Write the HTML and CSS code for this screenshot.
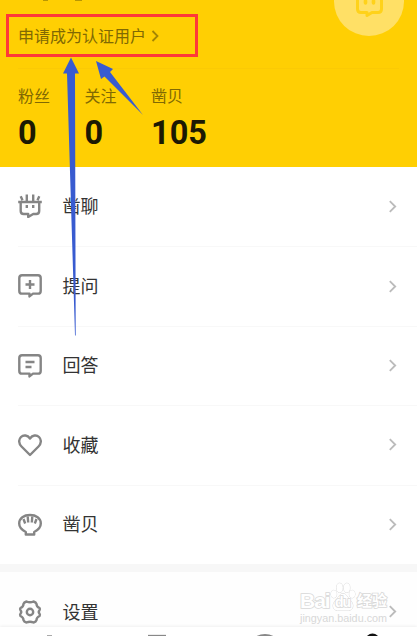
FILE: index.html
```html
<!DOCTYPE html>
<html lang="zh-CN">
<head>
    <meta charset="UTF-8">
    <meta name="viewport" content="width=device-width, initial-scale=1.0">
    <title>我的</title>
    <link rel="stylesheet" href="styles.css">
</head>
<body>
    <header class="profile">
        <svg class="signature" width="90" height="2" viewBox="0 0 90 2"><path d="M43 0h5M75 0h7" stroke="#a38505" stroke-width="1.5"/></svg>
        <div class="avatar">
            <svg width="30" height="30" viewBox="0 0 30 30" fill="none" stroke="#ffd21a" stroke-width="3" stroke-linejoin="round">
                <path d="M3.5 5v13q0 3.500 3.500 3.500h6v3l5-3h6q3.500 0 3.500-3.500V5"/>
                <path d="M11.500 10v2M19.500 10v2" stroke-width="3.6" stroke-linecap="round"/>
            </svg>
        </div>
        <a class="verify">
            <span>申请成为认证用户</span>
            <svg width="8" height="12" viewBox="0 0 8 12"><path d="M1.5 1l5 5-5 5" fill="none" stroke="#a38505" stroke-width="1.8"/></svg>
        </a>
        <div class="stats">
            <div class="stat"><span>粉丝</span><b>0</b></div>
            <div class="stat"><span>关注</span><b>0</b></div>
            <div class="stat"><span>凿贝</span><b>105</b></div>
        </div>
    </header>

    <main class="menu">
        <a class="item">
            <svg class="icon" viewBox="0 0 24 24">
                <path d="M.2 8h23.600M2.700 8v9q0 3 3 3h4.500v3l5-3h3q3 0 3-3V8M8.800 .5V8M15.200 .5V8M2.700 2.200l1.800 4M21.300 2.200l-1.800 4"/>
                <path d="M8.800 11v3M15.200 11v3"/>
            </svg>
            <span class="label">凿聊</span>
            <svg class="arrow" viewBox="0 0 8 12"><path d="M1.5 1l5 5-5 5"/></svg>
        </a>
        <a class="item">
            <svg class="icon" viewBox="0 0 24 24">
                <path d="M4 1.200h16q2.700 0 2.700 2.700v13q0 2.700-2.700 2.700h-5l-3.500 2.800v-2.800H4q-2.700 0-2.700-2.700v-13Q1.300 1.200 4 1.200z"/>
                <path d="M12 6v9M7.500 10.500h9"/>
            </svg>
            <span class="label">提问</span>
            <svg class="arrow" viewBox="0 0 8 12"><path d="M1.5 1l5 5-5 5"/></svg>
        </a>
        <a class="item">
            <svg class="icon" viewBox="0 0 24 24">
                <path d="M4 1.200h16q2.700 0 2.700 2.700v13q0 2.700-2.700 2.700h-5l-3.500 2.800v-2.800H4q-2.700 0-2.700-2.700v-13Q1.300 1.200 4 1.200z"/>
                <path d="M7.500 8h9M7.500 13h6"/>
            </svg>
            <span class="label">回答</span>
            <svg class="arrow" viewBox="0 0 8 12"><path d="M1.5 1l5 5-5 5"/></svg>
        </a>
        <a class="item">
            <svg class="icon" viewBox="0 0 24 24">
                <path d="M12 22L3.500 13.500C.5 10.500.5 6.500 3 4s6.500-2 9 1.500C14.500 2 18.500 1.500 21 4s2.500 6.500-.5 9.500z"/>
            </svg>
            <span class="label">收藏</span>
            <svg class="arrow" viewBox="0 0 8 12"><path d="M1.5 1l5 5-5 5"/></svg>
        </a>
        <a class="item">
            <svg class="icon" viewBox="0 0 24 24">
                <path d="M7.800 21.500v-2.500C4 17 1.200 14.500 1.200 10.500 1.200 5 6 2 12 2s10.800 3 10.800 8.500c0 4-2.800 6.500-6.600 8.500v2.500z"/>
                <path d="M5.500 6l1.700 4.500M9.700 3.500l.5 6M14.300 3.500l-.5 6M18.500 6l-1.700 4.500"/>
            </svg>
            <span class="label">凿贝</span>
            <svg class="arrow" viewBox="0 0 8 12"><path d="M1.5 1l5 5-5 5"/></svg>
        </a>
    </main>

    <section class="settings">
        <a class="item">
            <svg class="icon" viewBox="0 0 24 24">
                <path d="M8.500 1.500q3.500 1.600 7 0 2.500.8 3 2.400 0 2.600 3 4.100.8 1.200 0 2.400-1.600 1.600 0 3.200.8 1.200 0 2.400-3 1.500-3 4.100-.5 1.600-3 2.400-3.500-1.600-7 0-2.500-.8-3-2.400 0-2.600-3-4.100-.8-1.200 0-2.400 1.600-1.600 0-3.200-.8-1.200 0-2.400 3-1.500 3-4.100.5-1.600 3-2.400z"/>
                <circle cx="12" cy="12" r="3.200"/>
            </svg>
            <span class="label">设置</span>
            <svg class="arrow" viewBox="0 0 8 12"><path d="M1.5 1l5 5-5 5"/></svg>
        </a>
        <div class="watermark">
            <div class="brand">
                <span class="bai">Bai</span>
                <span class="paw">
                    <svg width="26" height="30" viewBox="0 0 27 30" fill="#fff" stroke="#d8d8d8">
                        <ellipse cx="4" cy="12" rx="3" ry="4"/>
                        <ellipse cx="10" cy="5.500" rx="3.200" ry="4.800"/>
                        <ellipse cx="17.500" cy="5.500" rx="3.200" ry="4.800"/>
                        <ellipse cx="23" cy="12" rx="3" ry="4"/>
                        <path d="M13.500 11.500c-4 0-5 5-8 7.500-4 4-2.500 10 2.500 10h11c5 0 6.500-6 2.500-10-3-2.500-4-7.500-8-7.500z"/>
                    </svg>
                    <em>du</em>
                </span>
                <span class="cn">经验</span>
            </div>
            <div class="url">jingyan.baidu.com</div>
        </div>
    </section>

    <nav class="tabbar">
        <svg width="417" height="9" viewBox="0 0 417 9">
            <path d="M47 8.500h5" stroke="#aaa" stroke-width="1"/>
            <path d="M148 8.500h18" stroke="#888" stroke-width="1.300"/>
            <ellipse cx="265" cy="13" rx="11" ry="6" fill="#888"/>
            <circle cx="372.500" cy="13.500" r="7" fill="#111"/>
        </svg>
    </nav>

    <div class="highlight"></div>
    <svg class="pointers" width="417" height="340" viewBox="0 0 417 340" fill="#385bd0">
        <path d="M71 57.500l8 16h-4l.7 262h-.7L67 73.500h-4z"/>
        <path d="M96 61l17 8-3 3L143 115l-38.500-38.500-3.500 2.500z"/>
    </svg>
</body>
</html>
```
FILE: styles.css
```css
body {
    margin: 0;
    position: relative;
    height: 636px;
    display: flex;
    flex-direction: column;
    overflow: hidden;
    background: #fff;
    font-family: Roboto, "Noto Sans CJK SC", sans-serif;
    color: #333;
}
svg {
    display: block;
    flex: none;
}
.profile {
    position: relative;
    flex: none;
    box-sizing: border-box;
    height: 167px;
    padding: 25px 18px 0;
    background: #ffcf03;
}
.signature {
    position: absolute;
    top: 0;
    left: 0;
}
.avatar {
    position: absolute;
    top: -33px;
    left: 334px;
    width: 70px;
    height: 69px;
    border-radius: 50%;
    background: #ffe066;
    overflow: hidden;
}
.avatar svg {
    margin: 24px 0 0 20px;
}
.verify {
    display: flex;
    align-items: center;
    gap: 5px;
    height: 23px;
    padding-bottom: 20px;
    border-bottom: 1px solid #fbca05;
    font-size: 16px;
    line-height: 23px;
    color: #806903;
}
.verify svg {
    margin-top: -1px;
}
.stats {
    display: flex;
    margin-top: 17px;
}
.stat {
    width: 66.5px;
}
.stat span {
    display: block;
    font-size: 16px;
    line-height: 22px;
    color: #806903;
}
.stat b {
    display: block;
    margin-top: 8px;
    font-size: 32.5px;
    line-height: 34px;
    color: #1c1903;
}
.menu {
    flex: none;
    border-bottom: 8px solid #f7f7f7;
}
.item {
    display: flex;
    align-items: center;
    box-sizing: border-box;
    height: 79.4px;
    margin-left: 18px;
    padding-right: 20.5px;
}
.item + .item {
    border-top: 1px solid #f8f8f8;
}
.icon {
    width: 24px;
    height: 24px;
    margin-top: -0.5px;
    fill: none;
    stroke: #858585;
    stroke-width: 2.4;
    stroke-linejoin: round;
}
.label {
    margin-top: 1px;
    margin-left: 20.5px;
    font-size: 18px;
    line-height: 26px;
}
.arrow {
    width: 9px;
    height: 13px;
    margin-top: -1px;
    margin-left: auto;
    fill: none;
    stroke: #bbb;
    stroke-width: 1.7;
}
.settings {
    position: relative;
    flex: none;
    height: 55px;
    background: #fefefe;
}
.settings .item {
    height: 80.4px;
}
.watermark {
    position: absolute;
    top: 9px;
    left: 300px;
    color: #fff;
    -webkit-text-stroke: 1.6px #d8d8d8;
    paint-order: stroke fill;
    font-family: "Liberation Sans", "Noto Sans CJK SC", sans-serif;
}
.brand {
    display: flex;
    align-items: flex-end;
    height: 31px;
    font-size: 21px;
    line-height: 22px;
}
.bai {
    width: 30px;
    font-weight: bold;
    letter-spacing: -1px;
}
.paw {
    position: relative;
}
.paw em {
    position: absolute;
    top: 12px;
    left: 5px;
    font-size: 14px;
    font-style: normal;
    font-weight: bold;
    letter-spacing: -1px;
    line-height: 16px;
}
.cn {
    margin-left: 1px;
    font-size: 15px;
    font-weight: bold;
}
.url {
    font-size: 10.8px;
    line-height: 12px;
    color: #d8d8d8;
    -webkit-text-stroke-width: 0;
}
.tabbar {
    position: relative;
    height: 9px;
    background: #fff;
    box-shadow: 0 -1px 3px rgba(0, 0, 0, 0.06);
}
.highlight {
    position: absolute;
    top: 14px;
    left: 6px;
    box-sizing: border-box;
    width: 192px;
    height: 43px;
    border: 3px solid #ff3838;
}
.pointers {
    position: absolute;
    top: 0;
    left: 0;
}
```
